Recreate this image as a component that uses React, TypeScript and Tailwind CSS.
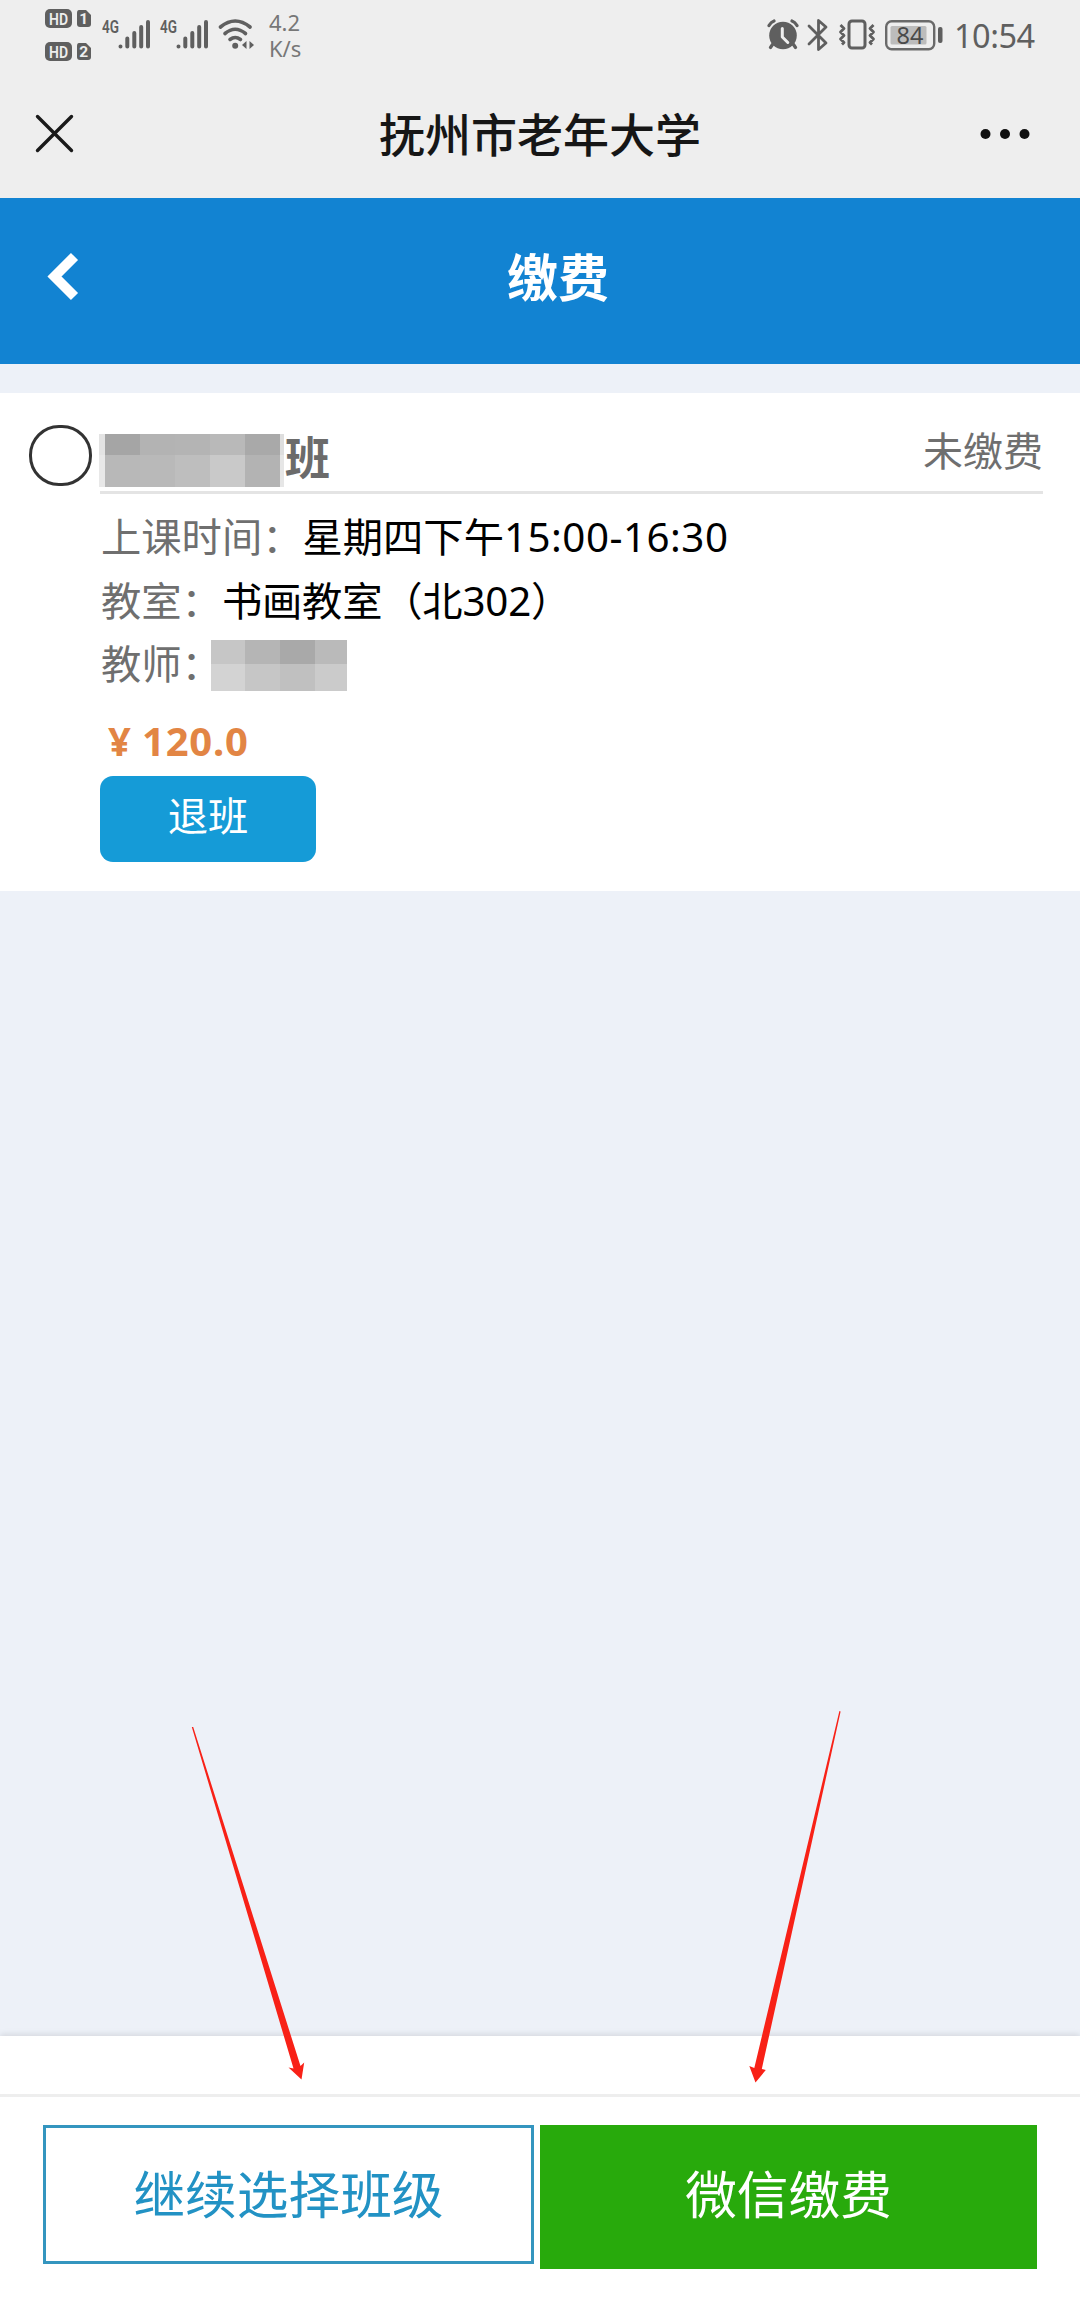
import { clsx } from "clsx";

interface MosaicProps {
  rows: string[][];
  columns: string;
  className?: string;
}

const nameRows = [
  ["bg-[#e3e3e3]", "bg-[#a5a5a5]", "bg-[#b3b3b3]", "bg-[#b4b4b4]", "bg-[#b9b9b9]", "bg-[#a9a9a9]", "bg-[#dedede]"],
  ["bg-[#e8e8e8]", "bg-[#b8b8b8]", "bg-[#b9b9b9]", "bg-[#bebebe]", "bg-[#c9c9c9]", "bg-[#b3b3b3]", "bg-[#e6e6e6]"],
];

const teacherRows = [
  ["bg-[#c6c6c6]", "bg-[#b5b5b5]", "bg-[#a9a9a9]", "bg-[#bababa]"],
  ["bg-[#d3d3d3]", "bg-[#c6c6c6]", "bg-[#c0c0c0]", "bg-[#cbcbcb]"],
];

const Mosaic = ({ rows, columns, className }: MosaicProps) => (
  <div className={clsx("grid", columns, className)}>
    {rows.flat().map((color, i) => (
      <span key={i} className={color} />
    ))}
  </div>
);

const HdBadge = ({ sim }: { sim: string }) => (
  <svg className="overflow-visible" width="46" height="19" viewBox="0 0 46 19">
    <rect x="0" y="0" width="27" height="19" rx="5" fill="#5f5f5f" />
    <text x="4" y="15.5" textLength="19" lengthAdjust="spacingAndGlyphs" fontFamily="Roboto, sans-serif" fontSize="17" fontWeight="600" fill="#eee">
      HD
    </text>
    <path d="M34 1h7l5 5v9q0 3-3 3h-8q-3 0-3-3V4q0-3 2-3z" fill="#5f5f5f" />
    <text x="38.8" y="15" textAnchor="middle" fontFamily="Roboto, sans-serif" fontSize="15.500" fontWeight="700" fill="#eee">
      {sim}
    </text>
  </svg>
);

const Signal = () => (
  <svg className="overflow-visible" width="49" height="31" viewBox="0 0 49 31">
    <text x="0" y="14" fontFamily="Roboto, sans-serif" fontSize="18.500" fontWeight="600" textLength="17" lengthAdjust="spacingAndGlyphs" fill="#5f5f5f">
      4G
    </text>
    <g stroke="#5f5f5f" strokeWidth="4" strokeLinecap="round">
      <path d="M18.5 27.5v.1M25.3 27.5v-8M32.3 27.5v-13.5M39.2 27.5v-19.500M46 27.5v-24.500" />
    </g>
  </svg>
);

const Wifi = () => (
  <svg width="37" height="31" viewBox="0 0 37 31">
    <g fill="none" stroke="#5f5f5f" strokeWidth="3.6" strokeLinecap="round">
      <path d="M2.500 8q14.700-12 29.500 0" />
      <path d="M7 14.500q10.200-8.500 20.500 0" />
      <path d="M12 20.500q5.200-4 10.500 0" />
    </g>
    <circle cx="17.200" cy="26.700" r="3" fill="#5f5f5f" />
    <path d="M24 26l4.500-4v8zM36 26l-4.500-4v8z" fill="#5f5f5f" />
  </svg>
);

const Alarm = () => (
  <svg width="32" height="31" viewBox="0 0 32 31">
    <circle cx="16" cy="16.500" r="13.800" fill="#5f5f5f" />
    <path d="M2 6.500Q4 3 7 2M30 6.500Q28 3 25 2M5.500 25.500l-2 3M26.500 25.500l2 3" stroke="#5f5f5f" strokeWidth="3.200" strokeLinecap="round" fill="none" />
    <path d="M15.300 9.500v8.500l5.500 5.500" stroke="#eee" strokeWidth="3" strokeLinecap="round" strokeLinejoin="round" fill="none" />
  </svg>
);

const Bluetooth = () => (
  <svg width="22" height="34" viewBox="0 0 22 34">
    <path d="M2 8l17 17-7.500 6.500V2.500L19 9 2 26" stroke="#5f5f5f" strokeWidth="2.800" strokeLinecap="round" strokeLinejoin="round" fill="none" />
  </svg>
);

const Vibrate = () => (
  <svg width="38" height="31" viewBox="0 0 38 31">
    <rect x="11" y="2" width="16" height="27" rx="3" stroke="#5f5f5f" strokeWidth="3" fill="none" />
    <path d="M2.500 6l3.500 3.500-3.500 3.500 3.500 3.500-3.500 3.500 3.500 3.500-2 2M35.500 6L32 9.500l3.500 3.500-3.500 3.500 3.500 3.500-3.500 3.500 2 2" stroke="#5f5f5f" strokeWidth="2.800" strokeLinejoin="round" fill="none" />
  </svg>
);

const Battery = () => (
  <svg className="overflow-visible" width="58" height="31" viewBox="0 0 58 31">
    <rect x="1.200" y="1.200" width="48" height="28" rx="5.500" stroke="#6a6a6a" strokeWidth="2.400" fill="none" />
    <rect x="5.500" y="6" width="36" height="18.500" rx="1.500" fill="#bcbcbc" />
    <text x="25" y="23.500" textAnchor="middle" fontSize="23.500" fill="#4a4a4a">
      84
    </text>
    <rect x="53" y="7" width="4.500" height="16" rx="2" fill="#5f5f5f" />
  </svg>
);

const StatusBar = () => (
  <div className="flex h-[70px] items-start pl-[45px] pr-[43px] text-[#5f5f5f]">
    <div className="mt-[9px] flex flex-col gap-[14px]">
      <HdBadge sim="1" />
      <HdBadge sim="2" />
    </div>
    <div className="ml-[11px] mt-[19px] flex gap-[9px]">
      <Signal />
      <Signal />
      <Wifi />
    </div>
    <div className="ml-[14px] mt-[9px] text-[22px] leading-[26px] text-[#777]">
      <p>4.2</p>
      <p>K/s</p>
    </div>
    <div className="ml-auto mt-[18px] flex items-start">
      <div className="mt-px"><Alarm /></div>
      <div className="ml-[8px]"><Bluetooth /></div>
      <div className="ml-[9px] mt-px"><Vibrate /></div>
      <div className="ml-[9px] mt-[2px]"><Battery /></div>
      <span className="ml-[11px] w-[83px] whitespace-nowrap text-[32.500px] leading-[36px] tracking-[-0.500px]">10:54</span>
    </div>
  </div>
);

const Row = ({ label, children }: { label: string; children: React.ReactNode }) => (
  <div className="flex h-[63.300px] items-center text-[40.300px]">
    <span className="text-[#6f6f6f]">{label}</span>
    {children}
  </div>
);

const Arrows = () => (
  <svg className="pointer-events-none absolute left-0 top-0" width="1080" height="2298" viewBox="0 0 1080 2298">
    <g fill="#f82117">
      <path d="M191.800 1727L293.500 2068.500 288.500 2067.500 301.500 2079.500 304.200 2062.500 300.500 2066 193.200 1727z" />
      <path d="M839.400 1711L754.300 2068 749.300 2066 755.500 2082.500 765.800 2070 761.800 2069 840.600 1711.500z" />
    </g>
  </svg>
);

export default function App() {
  return (
    <div className="relative flex h-[2298px] w-[1080px] flex-col overflow-hidden bg-[#edf1f8] font-['Noto_Sans','Noto_Sans_CJK_SC',sans-serif]">
      <header className="h-[198px] bg-[#eeeeee]">
        <StatusBar />
        <div className="flex h-[128px] items-center pl-[35px] pr-[50px]">
          <svg width="40" height="40" viewBox="0 0 40 40" stroke="#1a1a1a" strokeWidth="3.400" strokeLinecap="round">
            <path d="M2.500 2.500l34 34M36.500 2.500l-34 34" />
          </svg>
          <h1 className="ml-[304px] text-[46px] font-medium leading-[60px] text-[#161616]">抚州市老年大学</h1>
          <svg className="ml-auto" width="50" height="12" viewBox="0 0 50 12" fill="#111">
            <circle cx="5.500" cy="6" r="5" />
            <circle cx="25" cy="6" r="5" />
            <circle cx="44.500" cy="6" r="5" />
          </svg>
        </div>
      </header>

      <nav className="flex h-[166px] items-center bg-[#1283d2] pb-[8px] pl-[46px] text-white">
        <svg width="34" height="50" viewBox="0 0 34 50" fill="none" stroke="white" strokeWidth="10">
          <path d="M28.500 4.500L8.500 24.500l20 20" />
        </svg>
        <h2 className="ml-[427px] text-[51px] font-bold leading-[60px]">缴费</h2>
      </nav>

      <section className="mt-[29px] flex h-[498px] bg-white pl-[29px] pr-[37px]">
        <button aria-label="选择" className="mt-[32px] h-[61px] w-[63px] shrink-0 rounded-[30px] border-[3px] border-[#333]" />
        <div className="ml-[8px] flex-1">
          <div className="flex h-[101px] items-start border-b-[3px] border-[#e4e4e4]">
            <Mosaic
              rows={nameRows}
              columns="grid-cols-[6px_35px_35px_35px_35px_35px_4px] grid-rows-[21px_32px]"
              className="-ml-px mt-[41px]"
            />
            <span className="ml-px mt-[35px] text-[45px] font-bold leading-[60px] text-[#6b6b6b]">班</span>
            <span className="ml-auto mt-[28px] text-[40px] leading-[60px] text-[#6f6f6f]">未缴费</span>
          </div>
          <div className="ml-px mt-[12px]">
            <Row label="上课时间：">
              <span className="text-black">
                星期四下午<span className="tracking-[0.500px]">15:00-16:30</span>
              </span>
            </Row>
            <Row label="教室：">
              <span className="tracking-[-0.200px] text-black">书画教室（北302）</span>
            </Row>
            <Row label="教师：">
              <Mosaic
                rows={teacherRows}
                columns="grid-cols-[34px_35px_35px_32px] grid-rows-[24px_27px]"
                className="-ml-[11px] mt-[3px]"
              />
            </Row>
          </div>
          <p className="mt-[19px] flex h-[52px] items-center text-[40px] font-bold text-[#e28544]">
            <span className="ml-[8px] w-[34px]">¥</span>
            <span className="tracking-[0.800px]">120.0</span>
          </p>
          <button className="mt-[9px] block h-[86px] w-[216px] rounded-[13px] bg-[#159bd7] pb-[5px] text-[40.300px] leading-[76px] text-white">
            退班
          </button>
        </div>
      </section>

      <footer className="mt-auto h-[262px] bg-white shadow-[0_-2px_6px_rgba(0,0,0,0.10)]">
        <div className="h-[61px] border-b-[3px] border-[#eeeeee]" />
        <div className="flex items-start gap-[6px] pl-[43px] pt-[28px]">
          <button className="h-[139px] w-[491px] border-[3px] border-[#3495bf] text-[51.700px] leading-[127px] text-[#2292c4]">
            继续选择班级
          </button>
          <button className="h-[144px] w-[497px] bg-[#28aa0c] pb-[5px] text-[51.700px] leading-[133px] text-white">
            微信缴费
          </button>
        </div>
      </footer>
      <Arrows />
    </div>
  );
}
